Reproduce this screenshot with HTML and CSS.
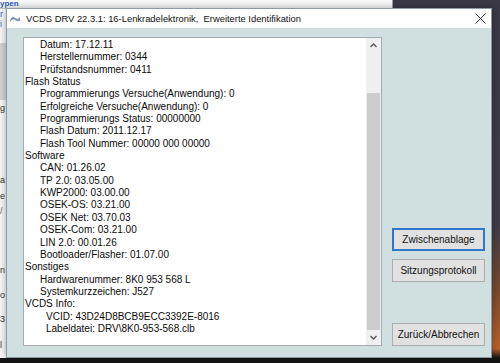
FILE: index.html
```html
<!doctype html>
<html>
<head>
    <title>VCDS Erweiterte Identifikation</title>
    <link rel="stylesheet" href="styles.css">
    <meta name="viewport" content="width=device-width, initial-scale=1.0">
</head>
<body>
<div class="desk">
    <div class="behind">
        <div class="behind-top"><span class="link">ypen</span></div>
        <div class="side">
            <div class="row link h10">r</div>
            <div class="row link h14">i</div>
            <div class="row h10"></div>
            <div class="row band"></div>
            <div class="row h30">g</div>
            <div class="row h42"></div>
            <div class="row">a</div>
            <div class="row">e</div>
            <div class="row box">/</div>
            <div class="row h44"></div>
            <div class="row">n</div>
            <div class="row h9"></div>
            <div class="row">o</div>
            <div class="row h8"></div>
            <div class="row">3</div>
            <div class="row h10"></div>
            <div class="row">l</div>
        </div>
    </div>

    <div class="dialog">
        <div class="titlebar">
            <svg class="app-icon" width="11" height="8" viewBox="0 0 11 8">
                <path d="M0 5 Q2 1 5 3 T10 2 L10 6 Q8 7 5 5 T0 7 Z" fill="#8a9aa8"/>
                <path d="M1 4 Q3 2 5 3.5" stroke="#4a78b0" stroke-width="1" fill="none"/>
            </svg>
            <span class="title">VCDS DRV 22.3.1: 16-Lenkradelektronik,&nbsp; Erweiterte Identifikation</span>
            <span class="close">
                <svg width="11" height="11" viewBox="0 0 11 11">
                    <path d="M0.5 0.5 L10.5 10.5 M10.5 0.5 L0.5 10.5" stroke="#333" stroke-width="1"/>
                </svg>
            </span>
        </div>

        <div class="content">
            <div class="listbox">
                <div class="list">
                    <div class="i1">Datum: 17.12.11</div>
                    <div class="i1">Herstellernummer: 0344</div>
                    <div class="i1">Prüfstandsnummer: 0411</div>
                    <div>Flash Status</div>
                    <div class="i1">Programmierungs Versuche(Anwendung): 0</div>
                    <div class="i1">Erfolgreiche Versuche(Anwendung): 0</div>
                    <div class="i1">Programmierungs Status: 00000000</div>
                    <div class="i1">Flash Datum: 2011.12.17</div>
                    <div class="i1">Flash Tool Nummer: 00000 000 00000</div>
                    <div>Software</div>
                    <div class="i1">CAN: 01.26.02</div>
                    <div class="i1">TP 2.0: 03.05.00</div>
                    <div class="i1">KWP2000: 03.00.00</div>
                    <div class="i1">OSEK-OS: 03.21.00</div>
                    <div class="i1">OSEK Net: 03.70.03</div>
                    <div class="i1">OSEK-Com: 03.21.00</div>
                    <div class="i1">LIN 2.0: 00.01.26</div>
                    <div class="i1">Bootloader/Flasher: 01.07.00</div>
                    <div>Sonstiges</div>
                    <div class="i1">Hardwarenummer: 8K0 953 568 L</div>
                    <div class="i1">Systemkurzzeichen: J527</div>
                    <div>VCDS Info:</div>
                    <div class="i2">VCID: 43D24D8BCB9ECC3392E-8016</div>
                    <div class="i2">Labeldatei: DRV\8K0-953-568.clb</div>
                </div>
                <div class="scrollbar">
                    <div class="sb-btn">
                        <svg width="7" height="5" viewBox="0 0 7 5"><path d="M0.5 4 L3.5 1 L6.5 4" stroke="#555" stroke-width="1.4" fill="none"/></svg>
                    </div>
                    <div class="sb-track"><div class="sb-thumb"></div></div>
                    <div class="sb-btn">
                        <svg width="7" height="5" viewBox="0 0 7 5"><path d="M0.5 1 L3.5 4 L6.5 1" stroke="#555" stroke-width="1.4" fill="none"/></svg>
                    </div>
                </div>
            </div>

            <div class="actions">
                <button class="btn default">Zwischenablage</button>
                <button class="btn log">Sitzungsprotokoll</button>
                <button class="btn">Zurück/Abbrechen</button>
            </div>
        </div>
    </div>
</div>
</body>
</html>
```

FILE: styles.css
```css
body {
    margin: 0;
    padding: 0;
    font-family: "Liberation Sans", Arial, sans-serif;
    background-color: #141414;
}
.desk {
    position: relative;
    width: 500px;
    height: 363px;
    overflow: hidden;
    background: linear-gradient(180deg, #3b3947 0%, #403c4a 62%, #7a4a2e 80%, #b8622c 96%, #141414 98.6%);
}

/* window behind the dialog */
.behind {
    position: absolute;
    left: 0;
    top: 0;
    width: 393px;
    height: 358px;
    background-color: #fafafa;
    border-right: 1px solid #9aa3a8;
    box-sizing: border-box;
}
.behind-top {
    height: 8px;
    border-bottom: 1px solid #c8c8c8;
    font-size: 8px;
    line-height: 8px;
}
.behind-top .link {
    color: #2a5fb8;
    font-weight: bold;
}
.side {
    width: 6px;
    font-size: 9px;
    color: #333;
}
.side .row {
    height: 16px;
    line-height: 16px;
    white-space: nowrap;
}
.side .link {
    color: #2a5fb8;
    line-height: 10px;
}
.side .band {
    height: 57px;
    background-color: #d6d6d6;
}
.side .box {
    height: 14px;
    color: #666;
    line-height: 14px;
}
.side .h8 { height: 8px; }
.side .h9 { height: 9px; }
.side .h10 { height: 10px; }
.side .h14 { height: 14px; }
.side .h30 { height: 30px; }
.side .h42 { height: 42px; }
.side .h44 { height: 44px; }

/* dialog */
.dialog {
    position: absolute;
    left: 6px;
    top: 8px;
    width: 486px;
    height: 350px;
    background-color: #d0e0e1;
    border: 1px solid #8e9aa3;
    box-sizing: border-box;
    box-shadow: 0 0 8px rgba(0, 0, 0, 0.35);
}
.titlebar {
    display: flex;
    align-items: center;
    height: 19px;
    background-color: #fff;
    padding-left: 3px;
}
.app-icon {
    margin-right: 5px;
}
.title {
    flex: 1;
    font-size: 9.4px;
    color: #111;
    white-space: nowrap;
}
.close {
    width: 11px;
    height: 11px;
    margin-right: 5px;
    display: flex;
}

.content {
    display: flex;
    padding: 9px 0 0 16px;
}
.listbox {
    display: flex;
    width: 359px;
    height: 309px;
    border: 1px solid #a3abb0;
    box-sizing: border-box;
    background-color: #fff;
}
.list {
    flex: 1;
    padding: 1px 0 0 1px;
    font-size: 10px;
    line-height: 12.35px;
    color: #0a0a0a;
    white-space: nowrap;
    overflow: hidden;
}
.i1 {
    padding-left: 15px;
}
.i2 {
    padding-left: 21px;
}
.scrollbar {
    width: 15px;
    display: flex;
    flex-direction: column;
    background-color: #f0f0f0;
}
.sb-btn {
    height: 15px;
    display: flex;
    align-items: center;
    justify-content: center;
}
.sb-track {
    flex: 1;
    display: flex;
    flex-direction: column;
    padding-top: 40px;
}
.sb-thumb {
    flex: 1;
    margin: 0 1px;
    background-color: #cdcdcd;
}

.actions {
    display: flex;
    flex-direction: column;
    justify-content: flex-end;
    height: 309px;
    margin-left: 10px;
}
.btn {
    width: 93px;
    height: 23px;
    margin: 0;
    padding: 0;
    font-family: "Liberation Sans", Arial, sans-serif;
    font-size: 10px;
    color: #111;
    background-color: #e1e1e1;
    border: 1px solid #adadad;
}
.btn.default {
    border: 2px solid #2f77c9;
    margin-bottom: 8px;
}
.btn.log {
    margin-bottom: 41px;
}
```
